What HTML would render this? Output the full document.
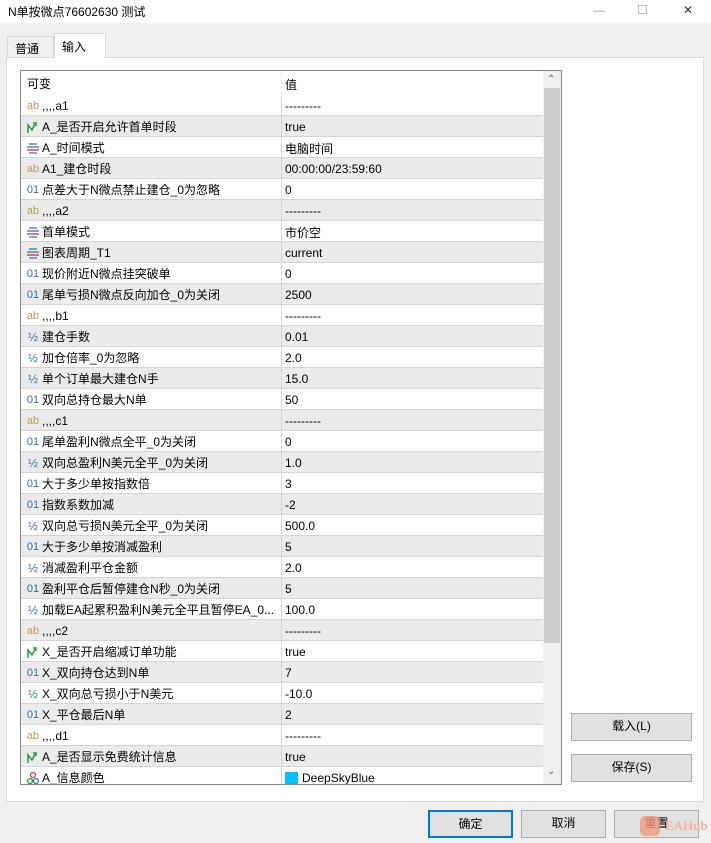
<!DOCTYPE html><html><head><meta charset="utf-8"><style>
*{margin:0;padding:0;box-sizing:border-box}
body{width:711px;height:843px;background:#f0f0f0;font-family:"Liberation Sans","Noto Sans CJK SC",sans-serif;font-size:12px;color:#000;position:relative;overflow:hidden}
.title{position:absolute;left:0;top:0;width:711px;height:23px;background:#fff;}
.title span{position:absolute;left:8px;top:3px;font-size:12px}
.wc{position:absolute;top:2px;font-size:13px;color:#999}
.tab{position:absolute;font-size:12px;border:1px solid #d9d9d9;border-bottom:none}
.panel{position:absolute;left:6px;top:57px;width:698px;height:745px;background:#fff;border:1px solid #d9d9d9}
.grid{position:absolute;left:20px;top:70px;width:542px;height:715px;border:1px solid #828790;background:#fff;overflow:hidden}
.row{position:absolute;left:0;width:523px;height:21px;border-bottom:1px solid #d4d4d4}
.row.g{background:#ebebeb}
.c1{position:absolute;left:0;top:0;width:261px;height:20px;border-right:1px solid #d4d4d4}
.ic{position:absolute;left:4px;top:1px;width:16px;height:20px;font-size:11px;display:flex;align-items:center;justify-content:center}
.t1{position:absolute;left:21px;top:1px;line-height:21px;white-space:nowrap}
.t2{position:absolute;left:264px;top:1px;white-space:nowrap;display:flex;align-items:center;height:20px}
.sb{position:absolute;left:522px;top:0;width:18px;height:713px;background:#f0f0f0}
.th{position:absolute;left:523px;top:17px;width:16px;height:555px;background:#cdcdcd}
.btn{position:absolute;background:#e1e1e1;border:1px solid #adadad;text-align:center;line-height:25px;font-size:12px}
</style></head><body>
<div class="title"><span>N单按微点76602630 测试</span><span class="wc" style="left:593px">—</span><span class="wc" style="left:637px">☐</span><span class="wc" style="left:683px;color:#333">✕</span></div>
<div class="tab" style="left:7px;top:36px;width:47px;height:22px;background:#f0f0f0;padding:3px 0 0 7px">普通</div>
<div class="panel"></div>
<div class="tab" style="left:54px;top:33px;width:52px;height:25px;background:#fff;padding:4px 0 0 7px;border-color:#d9d9d9;z-index:2">输入</div>
<div class="grid">
<div class="row" style="top:0;height:24px;border-bottom:none"><div class="c1" style="height:24px;border-right:1px solid #eee"></div><span class="t1" style="left:6px;line-height:24px">可变</span><span class="t2" style="height:24px">值</span></div>
<div id="rows"></div>
<div class="sb"><div style="position:absolute;left:4px;top:3px;color:#606060;font-size:10px">⌃</div><div style="position:absolute;left:4px;top:695px;color:#606060;font-size:10px">⌄</div></div>
<div class="th"></div>
</div>
<div class="btn" style="left:571px;top:713px;width:121px;height:28px">载入(L)</div>
<div class="btn" style="left:571px;top:754px;width:121px;height:28px">保存(S)</div>
<div class="btn" style="left:428px;top:810px;width:85px;height:28px;border:2px solid #0078d7;line-height:24px">确定</div>
<div class="btn" style="left:521px;top:810px;width:85px;height:28px">取消</div>
<div class="btn" style="left:614px;top:810px;width:85px;height:28px">重置</div>
<div style="position:absolute;left:640px;top:816px;width:20px;height:20px;background:#f19a7e;border-radius:5px;opacity:.8"></div>
<div style="position:absolute;left:665px;top:818px;color:#f4b3a0;font-weight:bold;font-size:13px;font-family:'Liberation Serif',serif">EAHub</div>
<script>
var R=[["ab",",,,,a1","---------"],["ar","A_是否开启允许首单时段","true"],["ls","A_时间模式","电脑时间"],["ab","A1_建仓时段","00:00:00/23:59:60"],["01","点差大于N微点禁止建仓_0为忽略","0"],["ab",",,,,a2","---------"],["ls","首单模式","市价空"],["ls2","图表周期_T1","current"],["01","现价附近N微点挂突破单","0"],["01","尾单亏损N微点反向加仓_0为关闭","2500"],["ab",",,,,b1","---------"],["h","建仓手数","0.01"],["h","加仓倍率_0为忽略","2.0"],["h","单个订单最大建仓N手","15.0"],["01","双向总持仓最大N单","50"],["ab",",,,,c1","---------"],["01","尾单盈利N微点全平_0为关闭","0"],["h","双向总盈利N美元全平_0为关闭","1.0"],["01","大于多少单按指数倍","3"],["01","指数系数加减","-2"],["h","双向总亏损N美元全平_0为关闭","500.0"],["01","大于多少单按消减盈利","5"],["h","消减盈利平仓金额","2.0"],["01","盈利平仓后暂停建仓N秒_0为关闭","5"],["h","加载EA起累积盈利N美元全平且暂停EA_0...","100.0"],["ab",",,,,c2","---------"],["ar","X_是否开启缩减订单功能","true"],["01","X_双向持仓达到N单","7"],["h","X_双向总亏损小于N美元","-10.0"],["01","X_平仓最后N单","2"],["ab",",,,,d1","---------"],["ar","A_是否显示免费统计信息","true"],["co","A_信息颜色","DeepSkyBlue"]];
var h="";
R.forEach(function(r,i){
var ic;
if(r[0]=="ab")ic='<span style="color:#c09a50">ab</span>';
else if(r[0]=="01")ic='<span style="color:#2a6fb0">01</span>';
else if(r[0]=="h")ic='<span style="color:#2a6fb0;font-size:12px">½</span>';
else if(r[0]=="ar")ic='<svg width="14" height="14" viewBox="0 0 14 14"><path d="M2 13V5l4 5 3-6" stroke="#2a9a3a" stroke-width="1.5" fill="none"/><path d="M7 3l3 0 0 3" stroke="#2a9a3a" stroke-width="1.5" fill="none"/></svg>';
else if(r[0]=="ls"||r[0]=="ls2")ic='<svg width="14" height="12"><path d="M3 2h8M1 5h12M1 8h12M3 11h8" stroke="#3a6fb0" stroke-width="1.2"/><path d="M1 8h12" stroke="#d04040" stroke-width="1.2"/></svg>';
else ic='<svg width="14" height="14"><circle cx="7" cy="4" r="2.5" fill="none" stroke="#d04040" stroke-width="1.3"/><circle cx="4" cy="10" r="2.5" fill="none" stroke="#2a9a3a" stroke-width="1.3"/><circle cx="10" cy="10" r="2.5" fill="none" stroke="#3a6fb0" stroke-width="1.3"/></svg>';
var v=r[2];if(r[0]=="co")v='<span style="display:inline-block;width:13px;height:13px;background:#00bfff;margin-right:4px"></span>'+v;
h+='<div class="row'+(i%2?' g':'')+'" style="top:'+(24+21*i)+'px"><div class="c1"></div><span class="ic">'+ic+'</span><span class="t1">'+r[1]+'</span><span class="t2">'+v+'</span></div>';
});
document.getElementById("rows").outerHTML=h;
</script>
</body></html>
